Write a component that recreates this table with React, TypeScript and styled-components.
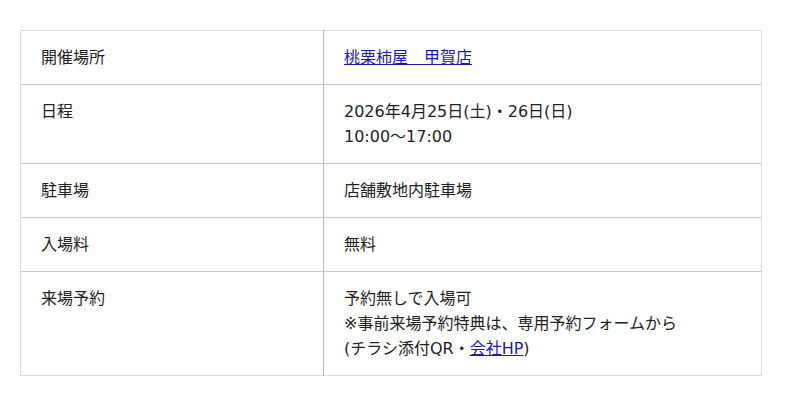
import {FunctionComponent} from 'react'
import styled, {createGlobalStyle} from 'styled-components'

const GlobalStyle = createGlobalStyle`
  body {
    margin: 0;
    background: #fff;
    font-family: "DejaVu Sans", "Noto Sans CJK JP", sans-serif;
    color: #222;
  }
`

const Wrapper = styled.div`
  padding: 30px 38px 30px 20px;
`

const InfoTable = styled.table`
  width: 742px;
  border-collapse: collapse;
  font-family: "DejaVu Sans", "Noto Sans CJK JP", sans-serif;
  font-size: 16px;
  line-height: 25px;
`

const Row = styled.tr`
  border-top: 1px solid #c8c8c8;
  border-bottom: 1px solid #c8c8c8;
  &:first-child {
    border-top-color: #dcdcdc;
  }
  &:last-child {
    border-bottom-color: #dcdcdc;
  }
`

const Label = styled.th`
  width: 262px;
  padding: 14px 20px;
  text-align: left;
  font-weight: normal;
  vertical-align: top;
  border-left: 1px solid #dcdcdc;
  border-right: 1px solid #b8b8b8;
`

const Value = styled.td`
  padding: 14px 20px;
  vertical-align: top;
  border-right: 1px solid #dcdcdc;
`

const Link = styled.a`
  color: #1a1aa6;
  text-decoration: underline;
`

interface InfoRow {
    label: string
    value: React.ReactNode
}

const rows: InfoRow[] = [
    {label: '開催場所', value: <Link href="#">桃栗柿屋　甲賀店</Link>},
    {label: '日程', value: <>2026年4月25日(土)・26日(日)<br/>10:00〜17:00</>},
    {label: '駐車場', value: '店舗敷地内駐車場'},
    {label: '入場料', value: '無料'},
    {
        label: '来場予約',
        value: <>予約無しで入場可<br/>※事前来場予約特典は、専用予約フォームから<br/>(チラシ添付QR・<Link href="#">会社HP</Link>)</>,
    },
]

const App: FunctionComponent = () => {
    return (
        <>
            <GlobalStyle/>
            <Wrapper>
                <InfoTable>
                    <tbody>
                    {rows.map(row => (
                        <Row key={row.label}>
                            <Label>{row.label}</Label>
                            <Value>{row.value}</Value>
                        </Row>
                    ))}
                    </tbody>
                </InfoTable>
            </Wrapper>
        </>
    )
}

export default App
